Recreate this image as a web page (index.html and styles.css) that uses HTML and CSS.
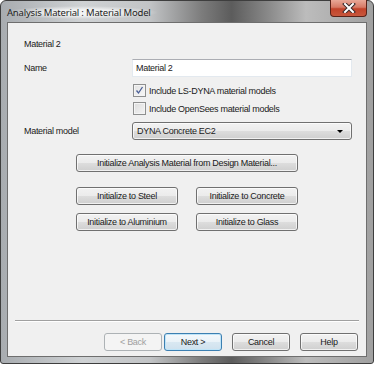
FILE: index.html
```html
<!DOCTYPE html>
<html lang="en">
<head>
    <meta charset="UTF-8">
    <title>Analysis Material : Material Model</title>
    <link rel="stylesheet" href="styles.css">
</head>
<body>
    <div class="window">
        <div class="titlebar">
            <span class="title">Analysis Material : Material Model</span>
            <div class="close-btn">
                <svg width="14" height="10" viewBox="0 0 14 10">
                    <path d="M3 1 L11 9 M11 1 L3 9" stroke="#3a2a2a" stroke-width="4" stroke-linecap="square"/>
                    <path d="M3 1 L11 9 M11 1 L3 9" stroke="#ffffff" stroke-width="2" stroke-linecap="square"/>
                </svg>
            </div>
        </div>

        <div class="client">
            <div class="caption">Material 2</div>

            <!-- name -->
            <div class="row row-name">
                <label class="row-label">Name</label>
                <div class="textbox">Material 2</div>
            </div>

            <!-- material library options -->
            <div class="check check-first">
                <span class="checkbox checked">
                    <svg width="9" height="9" viewBox="0 0 9 9">
                        <path d="M1.5 4.5 L3.5 7 L7.5 1" fill="none" stroke="#4a5f97" stroke-width="1.3"/>
                    </svg>
                </span>
                <span>Include LS-DYNA material models</span>
            </div>
            <div class="check check-second">
                <span class="checkbox"></span>
                <span>Include OpenSees material models</span>
            </div>

            <div class="row row-model">
                <label class="row-label">Material model</label>
                <div class="combo">
                    <span>DYNA Concrete EC2</span>
                    <span class="combo-arrow"></span>
                </div>
            </div>

            <button class="btn btn-wide">Initialize Analysis Material from Design Material...</button>

            <div class="init-grid">
                <button class="btn">Initialize to Steel</button>
                <button class="btn">Initialize to Concrete</button>
                <button class="btn">Initialize to Aluminium</button>
                <button class="btn">Initialize to Glass</button>
            </div>

            <div class="spacer"></div>
            <div class="separator"></div>

            <div class="footer">
                <button class="btn btn-nav" disabled>&lt; Back</button>
                <button class="btn btn-nav btn-default">Next &gt;</button>
                <button class="btn btn-nav btn-gap">Cancel</button>
                <button class="btn btn-nav btn-gap">Help</button>
            </div>
        </div>
    </div>
</body>
</html>
```

FILE: styles.css
```css
* {
    margin: 0;
    padding: 0;
    box-sizing: border-box;
}

body {
    background: #ffffff;
    font-family: "Liberation Sans", Arial, sans-serif;
    font-size: 9px;
    letter-spacing: -0.3px;
    color: #1a1a1a;
}

.window {
    width: 374px;
    height: 364px;
    border: 1px solid #3e3e3e;
    border-radius: 6px 6px 3px 3px;
    background: linear-gradient(90deg, #a8acb0 0%, #cfd2d4 22%, #c2c4c6 40%, #7c7c7c 54%, #5c5c5c 62%, #8a8a8a 72%, #bcbcbc 82%, #a0a0a0 100%);
    padding: 0 6px 6px 6px;
    display: flex;
    flex-direction: column;
}

.titlebar {
    height: 21px;
    display: flex;
    align-items: flex-start;
    position: relative;
}

.title {
    font-family: "Noto Sans", "Open Sans", sans-serif;
    font-size: 9.5px;
    letter-spacing: -0.2px;
    color: #1e1e1e;
    margin-top: 5px;
    padding: 0 6px 0 0;
    background: radial-gradient(ellipse at center, rgba(255,255,255,0.75) 30%, rgba(255,255,255,0) 72%);
}

.close-btn {
    position: absolute;
    top: -1px;
    right: 0;
    width: 37px;
    height: 17px;
    border: 1px solid #5a2218;
    border-top: none;
    border-radius: 0 0 4px 4px;
    background: linear-gradient(180deg, #e9a897 0%, #d77a66 45%, #c2432a 55%, #c8573c 100%);
    display: flex;
    align-items: center;
    justify-content: center;
}

.client {
    flex: 1;
    border: 1px solid #6e6e6e;
    background: #f0f0f0;
    padding: 14px 0 5px 16px;
    display: flex;
    flex-direction: column;
}

.caption {
    line-height: 15px;
}

.row {
    display: flex;
    align-items: center;
}

.row-name {
    margin-top: 7px;
}

.row-model {
    margin-top: 7px;
}

.row-label {
    width: 108px;
}

.textbox {
    width: 220px;
    height: 18px;
    background: #fff;
    border: 1px solid #e3e9ef;
    border-top-color: #abadb3;
    padding: 0 3px;
    line-height: 16px;
}

.check {
    display: flex;
    align-items: center;
    gap: 3px;
    margin-left: 109px;
    height: 13px;
}

.check-first {
    margin-top: 7px;
}

.check-second {
    margin-top: 5px;
}

.checkbox {
    width: 13px;
    height: 13px;
    border: 1px solid #8e8f8f;
    background: linear-gradient(135deg, #dcdcdc 0%, #f4f4f4 100%);
    box-shadow: inset 0 0 0 1px #f4f4f4;
    display: flex;
    align-items: center;
    justify-content: center;
}

.checkbox.checked {
    background: linear-gradient(135deg, #e2e2e2 0%, #f8f8f8 100%);
}

.combo {
    width: 220px;
    height: 18px;
    border: 1px solid #707070;
    border-radius: 3px;
    background: linear-gradient(180deg, #f2f2f2 0%, #ebebeb 50%, #dddddd 51%, #cfcfcf 100%);
    box-shadow: inset 0 0 0 1px rgba(255,255,255,0.7);
    padding: 0 4px;
    display: flex;
    align-items: center;
    justify-content: space-between;
}

.combo-arrow {
    width: 0;
    height: 0;
    border-left: 3px solid transparent;
    border-right: 3px solid transparent;
    border-top: 3px solid #000;
    margin-right: 4px;
}

.btn {
    font-family: inherit;
    font-size: inherit;
    letter-spacing: inherit;
    color: #1a1a1a;
    height: 18px;
    border: 1px solid #707070;
    border-radius: 3px;
    background: linear-gradient(180deg, #f2f2f2 0%, #ebebeb 50%, #dddddd 51%, #cfcfcf 100%);
    box-shadow: inset 0 0 0 1px rgba(255,255,255,0.7);
    text-align: center;
}

.btn-wide {
    width: 222px;
    margin: 14px 0 0 52px;
}

.init-grid {
    display: grid;
    grid-template-columns: 102px 102px;
    column-gap: 18px;
    row-gap: 8px;
    margin: 15px 0 0 52px;
}

.spacer {
    flex: 1;
}

.separator {
    height: 2px;
    margin: 0 7px 11px -9px;
    border-top: 1px solid #a0a0a0;
    border-bottom: 1px solid #ffffff;
}

.footer {
    display: flex;
    justify-content: flex-end;
    padding-right: 8px;
}

.btn-nav {
    width: 58px;
    margin-left: 2px;
}

.btn-gap {
    margin-left: 10px;
}

.btn-nav:disabled {
    color: #a0a0a0;
    border-color: #adb2b5;
    background: #f4f4f4;
    box-shadow: none;
}

.btn-default {
    border-color: #3c7fb1;
    background: linear-gradient(180deg, #f4f8fb 0%, #e9f2f8 50%, #d9e8f2 51%, #cfe1ee 100%);
    box-shadow: inset 0 0 0 1px #bfe4f8;
}
```
